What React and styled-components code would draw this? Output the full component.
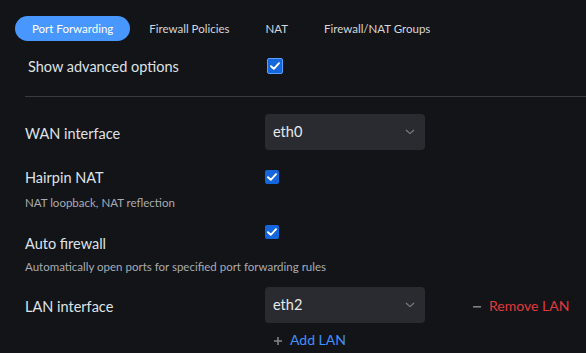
import React, { useState } from 'react';
import styled, { createGlobalStyle } from 'styled-components';

const GlobalStyle = createGlobalStyle`
  body {
    margin: 0;
    background: #131417;
    font-family: Lato, "Noto Sans", sans-serif;
    color: #dfe2e6;
  }
`;

const Page = styled.div`
  width: 586px;
  height: 353px;
  overflow: hidden;
  background: #131417;
  line-height: 1.2;
`;

const TabBar = styled.div`
  display: flex;
  gap: 2px;
  padding: 16px 0 0 15px;
`;

const Tab = styled.button`
  height: 25px;
  padding: 0 17px;
  border: none;
  border-radius: 13px;
  font-family: inherit;
  font-size: 11.5px;
  cursor: pointer;
  background: ${(p) => (p.$active ? '#4797ff' : 'transparent')};
  color: ${(p) => (p.$active ? '#ffffff' : '#d4d7dc')};
`;

const Body = styled.div`
  padding: 0 0 0 25px;
`;

const AdvancedRow = styled.div`
  display: grid;
  grid-template-columns: 239px auto;
  align-items: center;
  height: 34px;
  margin-top: 8px;
  padding-left: 3px;
`;

const Divider = styled.div`
  height: 1px;
  background: #3a3b3f;
  margin-top: 13px;
`;

const Row = styled.div`
  display: grid;
  grid-template-columns: 240px 160px auto;
  align-items: center;
  margin-top: ${(p) => p.$top || 0}px;
  height: ${(p) => p.$h || 36}px;
`;

const Label = styled.span`
  font-size: 14.5px;
  color: #dfe2e6;
  align-self: ${(p) => p.$align || 'center'};
  padding-top: ${(p) => p.$shift || 0}px;
`;

const Hint = styled.div`
  font-size: 11.5px;
  color: #a7acb4;
  margin-top: ${(p) => p.$top || 0}px;
`;

const SelectBox = styled.div`
  display: flex;
  align-items: center;
  justify-content: space-between;
  height: 36px;
  padding: 0 10px 0 8px;
  border-radius: 4px;
  background: #292b30;
  font-size: 14.5px;
  color: #e6e8eb;
  box-sizing: border-box;
`;

const Check = styled.span`
  display: inline-flex;
  align-items: center;
  justify-content: center;
  width: ${(p) => (p.$outlined ? 16 : 14)}px;
  height: ${(p) => (p.$outlined ? 16 : 14)}px;
  box-sizing: border-box;
  border-radius: 2px;
  background: #1466dd;
  border: ${(p) => (p.$outlined ? '1px solid #59a0ff' : 'none')};
  align-self: ${(p) => p.$align || 'center'};
`;

const LinkButton = styled.span`
  display: inline-flex;
  align-items: center;
  gap: 8px;
  font-size: 14px;
  color: ${(p) => p.$color};
  margin-left: ${(p) => p.$left || 0}px;
  padding-top: ${(p) => p.$shift || 0}px;
`;

const AddRow = styled.div`
  padding-left: 249px;
  margin-top: 6px;
`;

const Tick = () => (
  <svg width="10" height="8" viewBox="0 0 10 8">
    <path d="M1 4.2 L3.8 6.8 L9 1.2" fill="none" stroke="#fff" strokeWidth="1.9" strokeLinecap="round" strokeLinejoin="round" />
  </svg>
);

const Chevron = () => (
  <svg width="10" height="6" viewBox="0 0 10 6">
    <path d="M1 1 L5 4.6 L9 1" fill="none" stroke="#7d8189" strokeWidth="1.1" />
  </svg>
);

const Minus = () => (
  <svg width="8" height="2" viewBox="0 0 8 2">
    <rect width="8" height="1.6" fill="#7d8189" />
  </svg>
);

const Plus = () => (
  <svg width="8" height="8" viewBox="0 0 8 8">
    <rect y="3.2" width="8" height="1.6" fill="#7d8189" />
    <rect x="3.2" width="1.6" height="8" fill="#7d8189" />
  </svg>
);

const tabs = ['Port Forwarding', 'Firewall Policies', 'NAT', 'Firewall/NAT Groups'];

export default function App() {
  const [active, setActive] = useState(0);

  return (
    <Page>
      <GlobalStyle />
      <TabBar>
        {tabs.map((t, i) => (
          <Tab key={t} $active={i === active} onClick={() => setActive(i)}>
            {t}
          </Tab>
        ))}
      </TabBar>
      <Body>
        <AdvancedRow>
          <Label $shift={1}>Show advanced options</Label>
          <Check $outlined>
            <Tick />
          </Check>
        </AdvancedRow>
        <Divider />

        <Row $top={17}>
          <Label $shift={3}>WAN interface</Label>
          <SelectBox>
            eth0
            <Chevron />
          </SelectBox>
        </Row>

        <Row $top={16} $h={22}>
          <Label $shift={1}>Hairpin NAT</Label>
          <Check>
            <Tick />
          </Check>
        </Row>
        <Hint $top={8}>NAT loopback, NAT reflection</Hint>

        <Row $top={15} $h={28}>
          <Label $align="end">Auto firewall</Label>
          <Check $align="start">
            <Tick />
          </Check>
        </Row>
        <Hint $top={7}>Automatically open ports for specified port forwarding rules</Hint>

        <Row $top={13}>
          <Label $shift={5}>LAN interface</Label>
          <SelectBox>
            eth2
            <Chevron />
          </SelectBox>
          <LinkButton $color="#e0393e" $left={48} $shift={4}>
            <Minus />
            Remove LAN
          </LinkButton>
        </Row>
        <AddRow>
          <LinkButton $color="#4290ff">
            <Plus />
            Add LAN
          </LinkButton>
        </AddRow>
      </Body>
    </Page>
  );
}
